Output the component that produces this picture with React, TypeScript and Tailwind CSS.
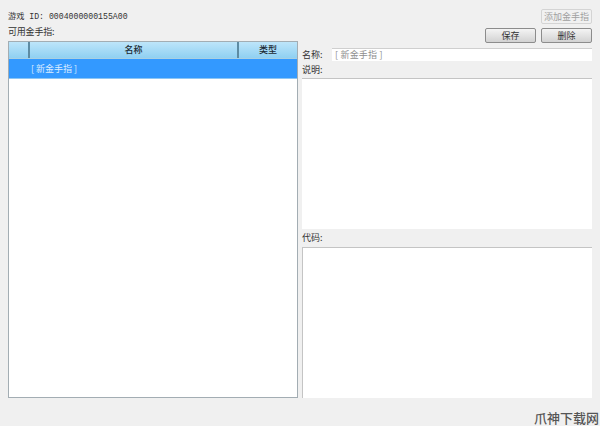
// Cheat manager window
const cjk = '"Noto Sans CJK SC", "Liberation Sans", sans-serif';

const ToolButton = ({ label, disabled = false }: { label: string; disabled?: boolean }) => (
  <button
    type="button"
    className={
      disabled
        ? 'h-[15px] w-[51px] border border-[#d4d4d4] rounded-[2px] bg-[#f1f1f1] text-[9px] leading-[13px] text-[#a0a0a0]'
        : 'h-[15px] w-[51px] border border-[#8c8c8c] rounded-[2px] bg-gradient-to-b from-[#f4f4f4] to-[#d2d2d2] text-[9px] leading-[13px] text-[#333]'
    }
  >
    {label}
  </button>
);

const App = () => {
  return (
    <div
      className="w-[600px] h-[426px] overflow-hidden bg-[#f0f0f0] text-[9px] text-[#333] flex flex-col pt-[9px] pl-2 pr-2"
      style={{ fontFamily: cjk }}
    >
      <div className="flex">
        {/* LEFT: CHEAT LIST */}
        <div className="w-[290px] flex flex-col shrink-0">
          <div className="h-[13px] mt-[1px] leading-[13px] font-['Liberation_Mono','Noto_Sans_CJK_SC',monospace] text-[8.2px] whitespace-nowrap">
            游戏 ID: 0004000000155A00
          </div>
          <div className="h-[13px] mt-[2px] leading-[13px] tracking-[-0.2px]">可用金手指:</div>
          <div className="h-[357px] mt-[3px] border border-[#a3adb3] bg-white flex flex-col">
            <div className="h-[17px] flex shrink-0 border-b border-[#a9cfe2] bg-gradient-to-b from-[#bde5fa] to-[#8fd0f2] font-medium text-[#1c2a33] text-center leading-[16px]">
              <div className="w-[21px] border-r-2 border-[#5d8ba3]" />
              <div className="w-[209px] border-r-2 border-[#5d8ba3]">名称</div>
              <div className="flex-1">类型</div>
            </div>
            <div className="h-[20px] flex shrink-0 bg-[#3399ff] border-b border-[#8cc6f5] text-[#dcecff] leading-[19px]">
              <div className="pl-[22px]">[ 新金手指 ]</div>
            </div>
          </div>
        </div>

        {/* RIGHT: DETAILS */}
        <div className="ml-1 flex-1 flex flex-col min-w-0">
          <div className="flex justify-end">
            <ToolButton label="添加金手指" disabled />
          </div>
          <div className="flex justify-end gap-[5px] mt-[4px]">
            <ToolButton label="保存" />
            <ToolButton label="删除" />
          </div>
          <div className="flex items-center h-[13px] mt-[5px]">
            <span className="w-[30px] shrink-0">名称:</span>
            <div className="flex-1 h-[13px] bg-white border-t border-[#cfcfcf] leading-[12px] pl-[3px] text-[#8f8f8f] tracking-[0.2px]">
              [ 新金手指 ]
            </div>
          </div>
          <div className="h-[13px] mt-[2px] leading-[13px]">说明:</div>
          <div className="h-[151px] mt-[2px] bg-white border-t border-[#c4c4c4]" />
          <div className="h-[18px] leading-[18px]">代码:</div>
          <div className="h-[151px] bg-white border-t border-l border-[#c4c4c4]" />
        </div>
      </div>

      {/* WATERMARK */}
      <div className="flex justify-end -mr-2 mt-[12px] pr-[1px] text-[13px] leading-[15px] font-medium text-[#555] whitespace-nowrap">
        爪神下载网
      </div>
    </div>
  );
};

export default App;
